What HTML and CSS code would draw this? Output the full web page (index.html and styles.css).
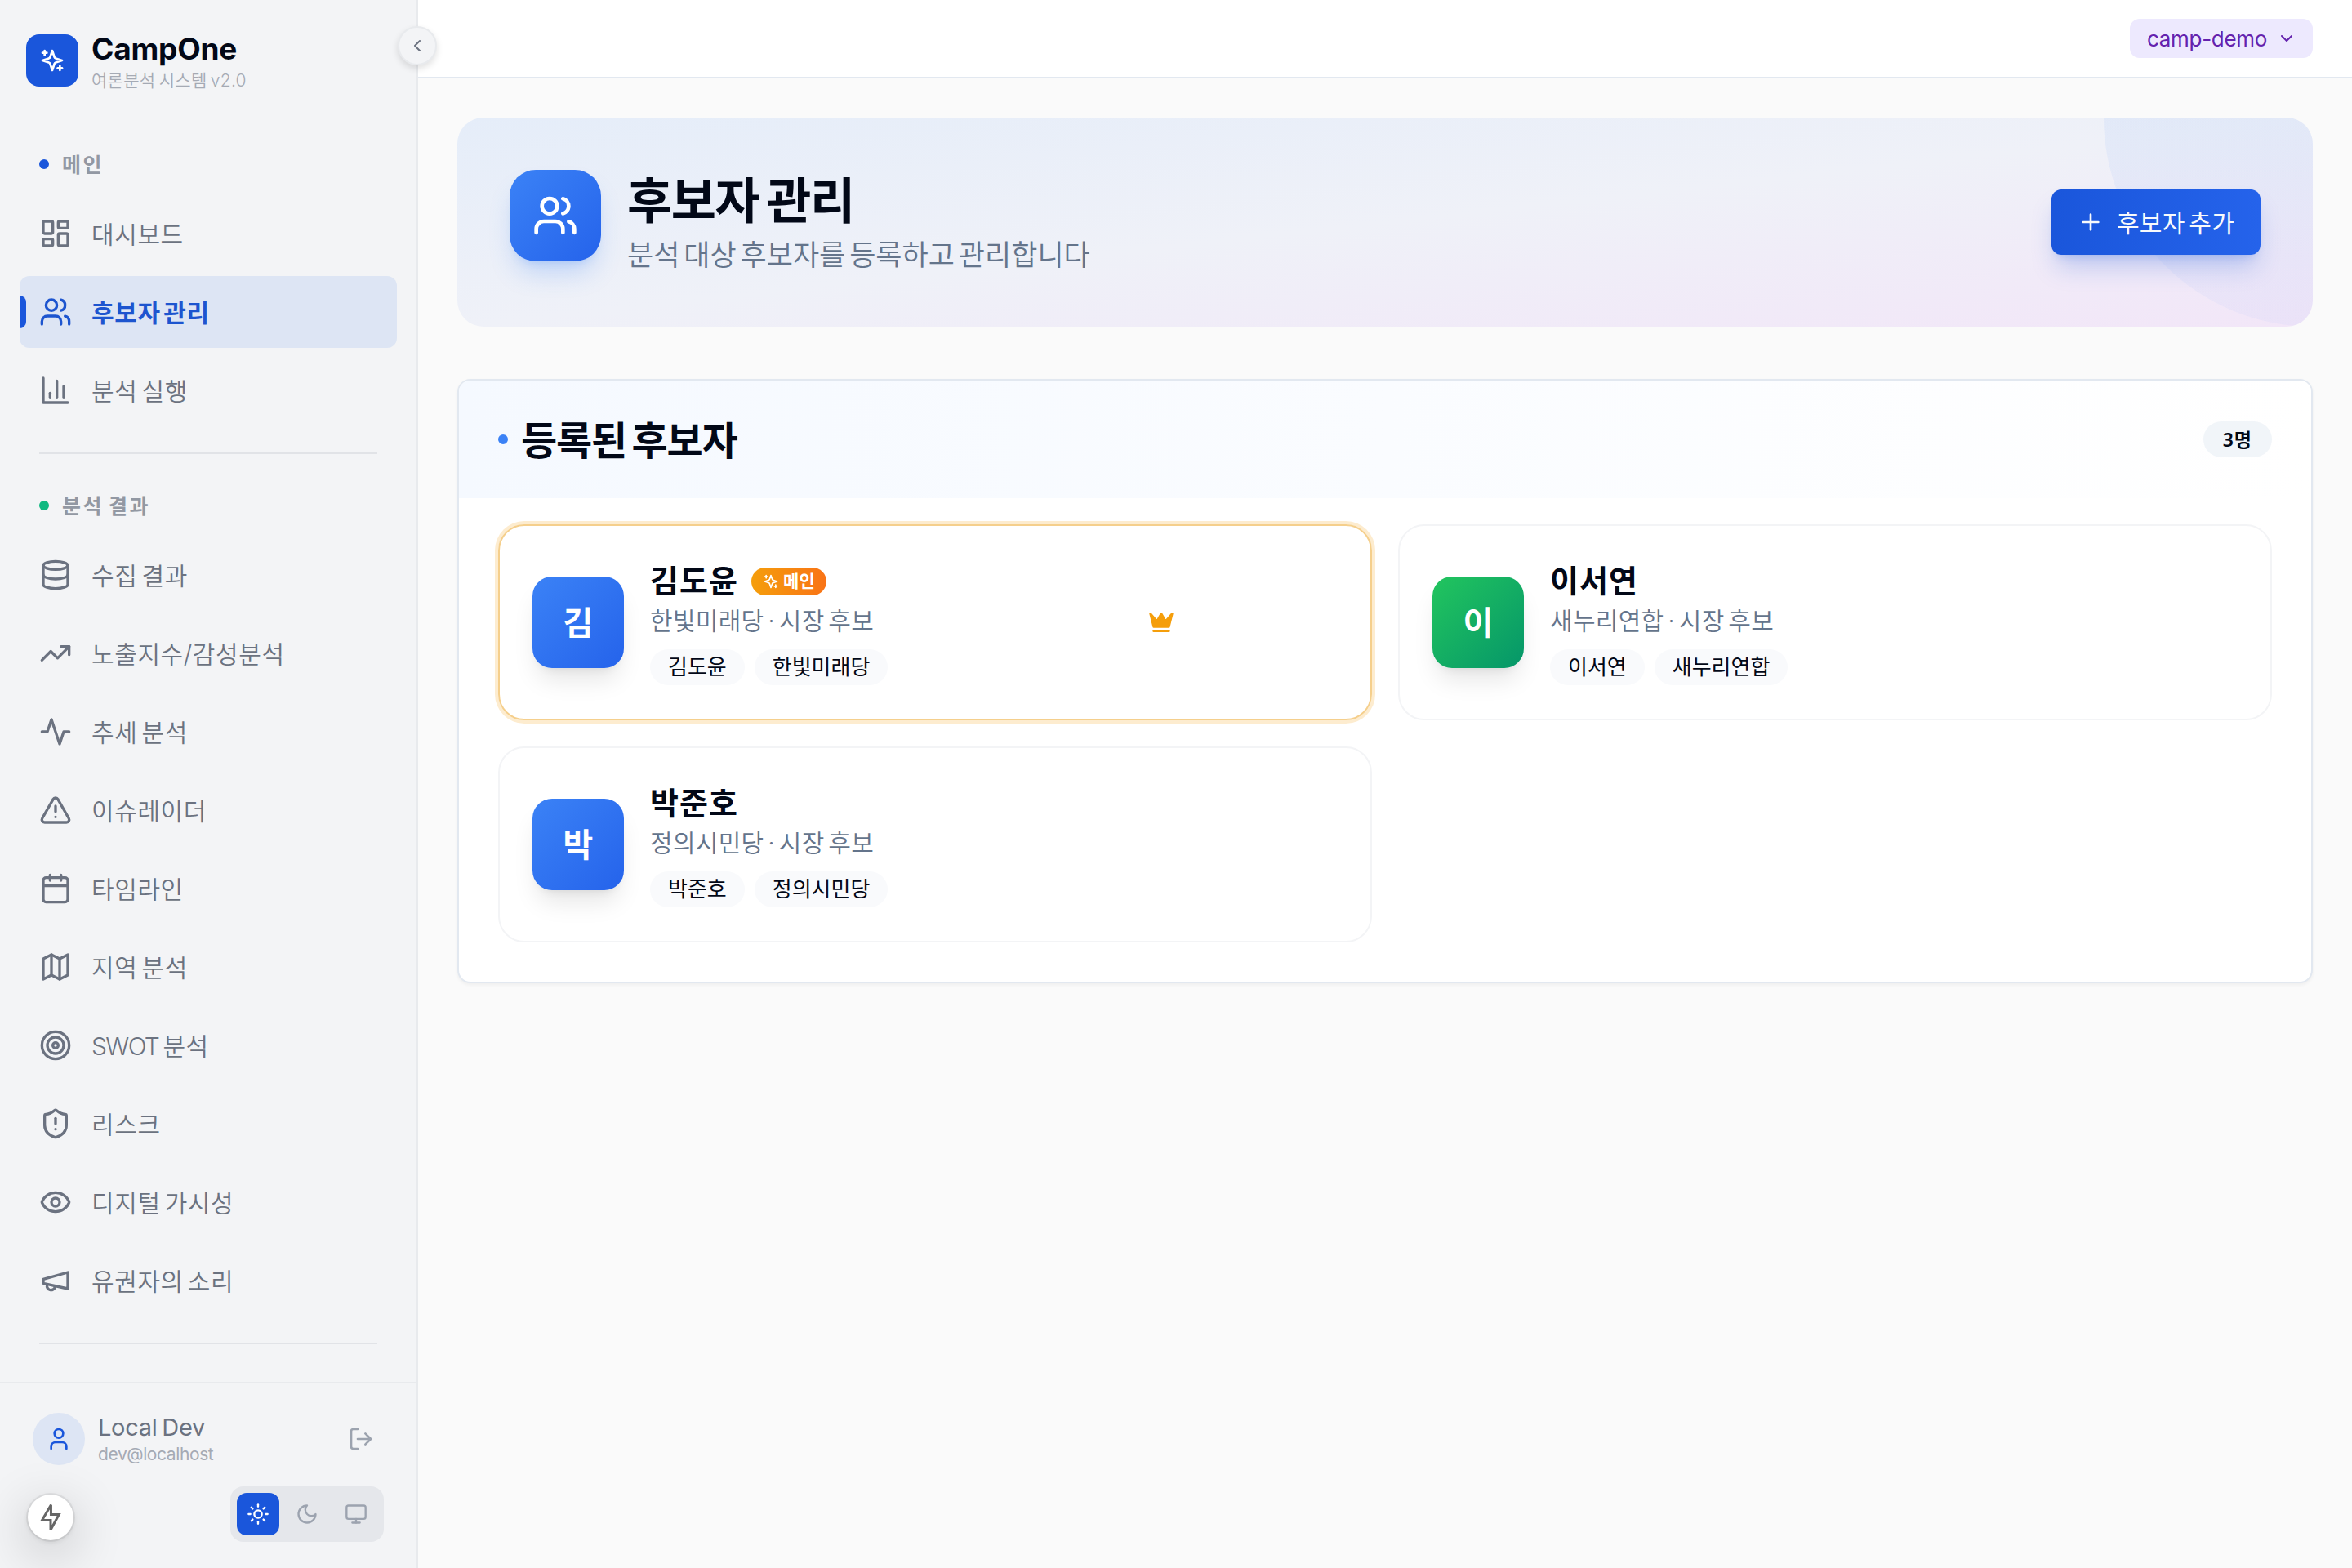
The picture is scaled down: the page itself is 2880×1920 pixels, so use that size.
FILE: index.html
```
<!DOCTYPE html>
<html lang="ko">
<head>
    <meta charset="UTF-8">
    <title>CampOne - 후보자 관리</title>
    <link rel="stylesheet" href="styles.css">
</head>
<body>
<svg class="sprite" aria-hidden="true">
    <symbol id="sparkles" viewBox="0 0 24 24">
        <path d="m12 3-1.912 5.813a2 2 0 0 1-1.275 1.275L3 12l5.813 1.912a2 2 0 0 1 1.275 1.275L12 21l1.912-5.813a2 2 0 0 1 1.275-1.275L21 12l-5.813-1.912a2 2 0 0 1-1.275-1.275L12 3Z"/>
        <path d="M5 3v4"/><path d="M19 17v4"/><path d="M3 5h4"/><path d="M17 19h4"/>
    </symbol>
    <symbol id="users" viewBox="0 0 24 24">
        <path d="M16 21v-2a4 4 0 0 0-4-4H6a4 4 0 0 0-4 4v2"/><circle cx="9" cy="7" r="4"/>
        <path d="M22 21v-2a4 4 0 0 0-3-3.87"/><path d="M16 3.13a4 4 0 0 1 0 7.75"/>
    </symbol>
</svg>

<div class="app">
    <aside class="sidebar">
        <div class="brand">
            <div class="brand-logo"><svg class="icon icon-32"><use href="#sparkles"/></svg></div>
            <div class="brand-text">
                <div class="brand-name">CampOne</div>
                <div class="brand-sub">여론분석 시스템 v2.0</div>
            </div>
        </div>
        <button class="collapse-btn" aria-label="접기">
            <svg class="icon icon-24" viewBox="0 0 24 24"><path d="m15 18-6-6 6-6"/></svg>
        </button>

        <nav class="nav">
            <div class="nav-label"><span class="dot"></span><span class="label-text">메인</span></div>
            <a class="nav-item">
                <svg class="icon" viewBox="0 0 24 24"><rect width="7" height="9" x="3" y="3" rx="1"/><rect width="7" height="5" x="14" y="3" rx="1"/><rect width="7" height="9" x="14" y="12" rx="1"/><rect width="7" height="5" x="3" y="16" rx="1"/></svg>
                <span>대시보드</span>
            </a>
            <a class="nav-item active">
                <svg class="icon"><use href="#users"/></svg>
                <span>후보자 관리</span>
            </a>
            <a class="nav-item">
                <svg class="icon" viewBox="0 0 24 24"><path d="M3 3v18h18"/><path d="M13 17V5"/><path d="M18 17V9"/><path d="M8 17v-3"/></svg>
                <span>분석 실행</span>
            </a>

            <div class="divider"></div>

            <div class="nav-label"><span class="dot green"></span><span class="label-text">분석 결과</span></div>
            <a class="nav-item">
                <svg class="icon" viewBox="0 0 24 24"><ellipse cx="12" cy="5" rx="9" ry="3"/><path d="M3 5v14a9 3 0 0 0 18 0V5"/><path d="M3 12a9 3 0 0 0 18 0"/></svg>
                <span>수집 결과</span>
            </a>
            <a class="nav-item">
                <svg class="icon" viewBox="0 0 24 24"><path d="m22 7-8.5 8.5-5-5L2 17"/><path d="M16 7h6v6"/></svg>
                <span>노출지수/감성분석</span>
            </a>
            <a class="nav-item">
                <svg class="icon" viewBox="0 0 24 24"><path d="M22 12h-4l-3 9L9 3l-3 9H2"/></svg>
                <span>추세 분석</span>
            </a>
            <a class="nav-item">
                <svg class="icon" viewBox="0 0 24 24"><path d="m21.73 18-8-14a2 2 0 0 0-3.48 0l-8 14A2 2 0 0 0 4 21h16a2 2 0 0 0 1.73-3Z"/><path d="M12 9v4"/><path d="M12 17h.01"/></svg>
                <span>이슈레이더</span>
            </a>
            <a class="nav-item">
                <svg class="icon" viewBox="0 0 24 24"><path d="M8 2v4"/><path d="M16 2v4"/><rect width="18" height="18" x="3" y="4" rx="2"/><path d="M3 10h18"/></svg>
                <span>타임라인</span>
            </a>
            <a class="nav-item">
                <svg class="icon" viewBox="0 0 24 24"><path d="m3 6 6-3 6 3 6-3v15l-6 3-6-3-6 3Z"/><path d="M9 3v15"/><path d="M15 6v15"/></svg>
                <span>지역 분석</span>
            </a>
            <a class="nav-item">
                <svg class="icon" viewBox="0 0 24 24"><circle cx="12" cy="12" r="10"/><circle cx="12" cy="12" r="6"/><circle cx="12" cy="12" r="2"/></svg>
                <span><span class="latin">SWOT</span> 분석</span>
            </a>
            <a class="nav-item">
                <svg class="icon" viewBox="0 0 24 24"><path d="M20 13c0 5-3.5 7.5-7.66 8.95a1 1 0 0 1-.67-.01C7.5 20.5 4 18 4 13V6a1 1 0 0 1 1-1c2 0 4.500-1.200 6.240-2.720a1.170 1.170 0 0 1 1.520 0C14.510 3.810 17 5 19 5a1 1 0 0 1 1 1z"/><path d="M12 8v4"/><path d="M12 16h.01"/></svg>
                <span>리스크</span>
            </a>
            <a class="nav-item">
                <svg class="icon" viewBox="0 0 24 24"><path d="M2.062 12.348a1 1 0 0 1 0-.696 10.750 10.750 0 0 1 19.876 0 1 1 0 0 1 0 .696 10.750 10.750 0 0 1-19.876 0"/><circle cx="12" cy="12" r="3"/></svg>
                <span>디지털 가시성</span>
            </a>
            <a class="nav-item">
                <svg class="icon" viewBox="0 0 24 24"><path d="m3 11 18-5v12L3 14v-3z"/><path d="M11.600 16.800a3 3 0 1 1-5.800-1.600"/></svg>
                <span>유권자의 소리</span>
            </a>

            <div class="divider"></div>
        </nav>

        <div class="sidebar-footer">
            <div class="user">
                <div class="user-avatar">
                    <svg class="icon icon-32" viewBox="0 0 24 24"><path d="M19 21v-2a4 4 0 0 0-4-4H9a4 4 0 0 0-4 4v2"/><circle cx="12" cy="7" r="4"/></svg>
                </div>
                <div class="user-text">
                    <div class="user-name">Local Dev</div>
                    <div class="user-mail">dev@localhost</div>
                </div>
                <svg class="icon icon-32 logout" viewBox="0 0 24 24"><path d="M9 21H5a2 2 0 0 1-2-2V5a2 2 0 0 1 2-2h4"/><path d="m16 17 5-5-5-5"/><path d="M21 12H9"/></svg>
            </div>
            <div class="theme-toggle">
                <button class="theme-btn selected">
                    <svg class="icon icon-28" viewBox="0 0 24 24"><circle cx="12" cy="12" r="4"/><path d="M12 2v2"/><path d="M12 20v2"/><path d="m4.930 4.930 1.410 1.410"/><path d="m17.660 17.660 1.410 1.410"/><path d="M2 12h2"/><path d="M20 12h2"/><path d="m6.340 17.660-1.410 1.410"/><path d="m19.070 4.930-1.410 1.410"/></svg>
                </button>
                <button class="theme-btn">
                    <svg class="icon icon-28" viewBox="0 0 24 24"><path d="M12 3a6 6 0 0 0 9 9 9 9 0 1 1-9-9Z"/></svg>
                </button>
                <button class="theme-btn">
                    <svg class="icon icon-28" viewBox="0 0 24 24"><rect width="20" height="14" x="2" y="3" rx="2"/><path d="M8 21h8"/><path d="M12 17v4"/></svg>
                </button>
            </div>
        </div>
        <button class="quick-btn" aria-label="바로가기">
            <svg class="quick-icon" viewBox="0 0 24 24"><path d="M12.300 1.800 5 14.300h7V22.200L18.800 9.700h-6.500Z"/></svg>
        </button>
    </aside>

    <div class="content">
        <header class="topbar">
            <button class="camp-select">
                <span>camp-demo</span>
                <svg class="icon icon-24" viewBox="0 0 24 24"><path d="m6 9 6 6 6-6"/></svg>
            </button>
        </header>

        <main class="main">
            <section class="hero">
                <div class="hero-circle"></div>
                <div class="hero-icon"><svg class="icon icon-56"><use href="#users"/></svg></div>
                <div class="hero-text">
                    <h1>후보자 관리</h1>
                    <p>분석 대상 후보자를 등록하고 관리합니다</p>
                </div>
                <button class="add-btn">
                    <svg class="icon icon-32" viewBox="0 0 24 24"><path d="M5 12h14"/><path d="M12 5v14"/></svg>
                    <span>후보자 추가</span>
                </button>
            </section>

            <section class="panel">
                <div class="panel-header">
                    <span class="panel-dot"></span>
                    <h2>등록된 후보자</h2>
                    <span class="count">3명</span>
                </div>
                <div class="candidates">
                    <div class="candidate main-candidate">
                        <div class="avatar">김</div>
                        <div class="info">
                            <div class="name-row">
                                <span class="name">김도윤</span>
                                <span class="main-badge"><svg class="icon icon-20"><use href="#sparkles"/></svg>메인</span>
                            </div>
                            <div class="party">한빛미래당 · 시장 후보</div>
                            <div class="chips"><span class="chip">김도윤</span><span class="chip">한빛미래당</span></div>
                        </div>
                        <svg class="icon icon-32 crown" viewBox="0 0 24 24"><path d="m2 4 3 12h14l3-12-6 7-4-7-4 7-6-7z"/><path d="M5 20h14"/></svg>
                    </div>

                    <div class="candidate">
                        <div class="avatar green">이</div>
                        <div class="info">
                            <div class="name-row"><span class="name">이서연</span></div>
                            <div class="party">새누리연합 · 시장 후보</div>
                            <div class="chips"><span class="chip">이서연</span><span class="chip">새누리연합</span></div>
                        </div>
                    </div>

                    <div class="candidate">
                        <div class="avatar">박</div>
                        <div class="info">
                            <div class="name-row"><span class="name">박준호</span></div>
                            <div class="party">정의시민당 · 시장 후보</div>
                            <div class="chips"><span class="chip">박준호</span><span class="chip">정의시민당</span></div>
                        </div>
                    </div>
                </div>
            </section>
        </main>
    </div>
</div>
</body>
</html>
```
FILE: styles.css
```
* {
    box-sizing: border-box;
    margin: 0;
    padding: 0;
}

body {
    font-family: Inter, "Noto Sans CJK KR", sans-serif;
    font-size: 30px;
    letter-spacing: 0.3px;
    word-spacing: -4px;
    color: #020817;
    background-color: #fafafa;
}

button {
    font: inherit;
    letter-spacing: inherit;
    word-spacing: inherit;
    color: inherit;
    border: none;
    background: none;
}

.sprite {
    display: none;
}

.icon {
    width: 40px;
    height: 40px;
    flex-shrink: 0;
    fill: none;
    stroke: currentColor;
    stroke-width: 2;
    stroke-linecap: round;
    stroke-linejoin: round;
}

.icon-20 { width: 20px; height: 20px; }
.icon-24 { width: 24px; height: 24px; }
.icon-28 { width: 28px; height: 28px; }
.icon-32 { width: 32px; height: 32px; }
.icon-56 { width: 56px; height: 56px; }

.app {
    display: flex;
    width: 2880px;
    height: 1920px;
    overflow: hidden;
}

/* sidebar */
.sidebar {
    position: relative;
    display: flex;
    flex-direction: column;
    width: 512px;
    flex-shrink: 0;
    background-color: #f3f4f6;
    border-right: 2px solid #e8eaed;
}

.brand {
    display: flex;
    align-items: center;
    gap: 16px;
    height: 148px;
    padding: 0 32px;
}

.brand-logo {
    display: flex;
    align-items: center;
    justify-content: center;
    width: 64px;
    height: 64px;
    border-radius: 16px;
    color: white;
    background-color: #1a56db;
}

.brand-text {
    padding-top: 6px;
}

.brand-name {
    font-size: 37px;
    font-weight: 700;
    line-height: 40px;
    letter-spacing: -0.2px;
}

.brand-sub {
    margin-top: 4px;
    font-size: 21px;
    font-weight: 350;
    line-height: 30px;
    word-spacing: -2px;
    color: #a5aab4;
}

.collapse-btn {
    position: absolute;
    top: 32px;
    right: -25px;
    z-index: 2;
    display: flex;
    align-items: center;
    justify-content: center;
    width: 48px;
    height: 48px;
    border: 2px solid #e8eaed;
    border-radius: 50%;
    color: #6b7280;
    background-color: #f3f4f6;
    box-shadow: 0 4px 8px rgba(0, 0, 0, 0.12);
}

.nav {
    flex: 1;
    padding: 24px 24px 0;
}

.nav-label {
    display: flex;
    align-items: center;
    gap: 16px;
    height: 58px;
    margin-bottom: 12px;
    padding-left: 24px;
    font-size: 25px;
    font-weight: 700;
    letter-spacing: 2.4px;
    word-spacing: -2px;
    color: #9298a3;
}

.label-text {
    padding-bottom: 3px;
}

.dot {
    width: 12px;
    height: 12px;
    border-radius: 50%;
    background-color: #1a56db;
}

.dot.green {
    background-color: #10b981;
}

.nav-item {
    position: relative;
    display: flex;
    align-items: center;
    gap: 24px;
    width: 462px;
    height: 88px;
    margin-bottom: 8px;
    padding-left: 24px;
    border-radius: 12px;
    font-weight: 350;
    letter-spacing: 0.6px;
    color: #6b7280;
    overflow: hidden;
}

.nav-item span {
    padding-bottom: 2px;
}

.nav-item.active {
    font-weight: 700;
    color: #1d55cf;
    background-color: #dde5f4;
}

.nav-item.active::before {
    content: "";
    position: absolute;
    left: 0;
    top: 24px;
    width: 8px;
    height: 40px;
    border-radius: 0 8px 8px 0;
    background-color: #1a56db;
}

.latin {
    letter-spacing: -1.6px;
}

.divider {
    width: 414px;
    height: 2px;
    margin: 32px 24px 34px;
    background-color: #e1e3e7;
}

.sidebar-footer {
    display: flex;
    flex-direction: column;
    height: 228px;
    padding: 36px 40px 32px;
    border-top: 2px solid #e8eaed;
}

.user {
    display: flex;
    align-items: center;
    gap: 16px;
    height: 64px;
}

.user-avatar {
    display: flex;
    align-items: center;
    justify-content: center;
    width: 64px;
    height: 64px;
    border-radius: 50%;
    color: #1a56db;
    background-color: #dde5f4;
}

.user-text {
    flex: 1;
}

.user-name {
    font-size: 29px;
    line-height: 38px;
    letter-spacing: -0.3px;
    word-spacing: -2px;
    color: #6b7280;
}

.user-mail {
    font-size: 21px;
    line-height: 28px;
    letter-spacing: -0.4px;
    color: #a5aab4;
}

.logout {
    margin-right: 12px;
    color: #9ca3af;
}

.theme-toggle {
    display: flex;
    align-self: flex-end;
    gap: 8px;
    margin-top: 26px;
    padding: 8px;
    border-radius: 16px;
    background-color: #e5e7eb;
}

.theme-btn {
    display: flex;
    align-items: center;
    justify-content: center;
    width: 52px;
    height: 52px;
    border-radius: 12px;
    color: #9ca3af;
}

.theme-btn.selected {
    color: white;
    background-color: #1a56db;
}

.quick-btn {
    position: absolute;
    left: 34px;
    bottom: 34px;
    display: flex;
    align-items: center;
    justify-content: center;
    width: 56px;
    height: 56px;
    border-radius: 50%;
    background-color: white;
    box-shadow: 0 0 0 2px rgba(0, 0, 0, 0.06), 0 2px 6px rgba(0, 0, 0, 0.1), 0 16px 64px rgba(0, 0, 0, 0.24);
}

.quick-icon {
    width: 36px;
    height: 36px;
    flex-shrink: 0;
    fill: none;
    stroke: #666;
    stroke-width: 2;
    stroke-miterlimit: 2.5;
}

/* content */
.content {
    flex: 1;
    min-width: 0;
}

.topbar {
    display: flex;
    align-items: center;
    justify-content: flex-end;
    height: 96px;
    padding: 0 48px;
    background-color: white;
    border-bottom: 2px solid #e2e8f0;
}

.camp-select {
    display: flex;
    align-items: center;
    justify-content: space-between;
    width: 224px;
    height: 48px;
    padding: 0 20px 0 21px;
    border-radius: 12px;
    font-size: 26px;
    letter-spacing: -0.3px;
    color: #6422ae;
    background-color: #ede9fe;
}

.main {
    display: flex;
    flex-direction: column;
    gap: 64px;
    padding: 48px;
}

.hero {
    position: relative;
    display: flex;
    align-items: center;
    gap: 32px;
    height: 256px;
    padding: 0 64px;
    border-radius: 32px;
    background: linear-gradient(to bottom right, #e5edf9, #eff1f8 50%, #f2e6f8);
    overflow: hidden;
}

.hero-circle {
    position: absolute;
    top: -256px;
    right: -256px;
    width: 512px;
    height: 512px;
    border-radius: 50%;
    background: linear-gradient(to bottom, rgba(59, 130, 246, 0.07) 50%, rgba(59, 130, 246, 0.04));
}

.hero-icon {
    display: flex;
    align-items: center;
    justify-content: center;
    width: 112px;
    height: 112px;
    margin-bottom: 16px;
    border-radius: 32px;
    color: white;
    background: linear-gradient(to bottom right, #3b82f6, #2563eb);
    box-shadow: 0 20px 30px -6px rgba(59, 130, 246, 0.25), 0 8px 12px -8px rgba(59, 130, 246, 0.25);
}

.hero-text {
    flex: 1;
    padding-top: 5px;
}

h1 {
    font-size: 60px;
    line-height: 72px;
    letter-spacing: -1.4px;
}

.hero-text p {
    margin-top: 2px;
    font-size: 35px;
    font-weight: 350;
    line-height: 56px;
    letter-spacing: 0;
    word-spacing: -5px;
    color: #64748b;
}

.add-btn {
    position: relative;
    display: flex;
    align-items: center;
    justify-content: center;
    gap: 16px;
    width: 256px;
    height: 80px;
    border-radius: 12px;
    color: #f8fafc;
    background: linear-gradient(to right, #1a56db, #2563eb);
    box-shadow: 0 20px 30px -6px rgba(26, 86, 219, 0.25), 0 8px 12px -8px rgba(26, 86, 219, 0.25);
}

.add-btn span {
    padding-bottom: 2px;
}

.panel {
    border: 2px solid #e2e8f0;
    border-radius: 16px;
    background-color: white;
    box-shadow: 0 2px 4px rgba(0, 0, 0, 0.05);
    overflow: hidden;
}

.panel-header {
    display: flex;
    align-items: center;
    height: 144px;
    padding: 0 48px;
    background: linear-gradient(to right, #f5f9ff, white);
}

.panel-dot {
    width: 12px;
    height: 12px;
    margin-right: 16px;
    border-radius: 50%;
    background-color: #3b82f6;
}

h2 {
    flex: 1;
    padding-top: 3px;
    font-size: 48px;
    line-height: 64px;
    letter-spacing: -1.1px;
}

.count {
    padding: 0 24px;
    border-radius: 22px;
    font-family: "Noto Sans", "Noto Sans CJK KR", sans-serif;
    font-size: 23px;
    font-weight: 600;
    line-height: 44px;
    letter-spacing: 1px;
    background-color: #f1f5f9;
}

.candidates {
    display: grid;
    grid-template-columns: 1fr 1fr;
    gap: 32px;
    padding: 32px 48px 48px;
}

.candidate {
    display: flex;
    align-items: center;
    gap: 32px;
    height: 240px;
    padding: 0 40px;
    border: 2px solid #f3f4f6;
    border-radius: 32px;
}

.main-candidate {
    border-color: #f5cf8c;
    box-shadow: 0 0 0 4px #fdeccf;
}

.avatar {
    display: flex;
    align-items: center;
    justify-content: center;
    width: 112px;
    height: 112px;
    padding-bottom: 4px;
    border-radius: 24px;
    font-size: 40px;
    font-weight: 700;
    color: white;
    background: linear-gradient(to bottom right, #3b82f6, #2563eb);
    box-shadow: 0 20px 30px -6px rgba(0, 0, 0, 0.1), 0 8px 12px -8px rgba(0, 0, 0, 0.1);
}

.avatar.green {
    background: linear-gradient(to bottom right, #22c55e, #059669);
}

.name-row {
    display: flex;
    align-items: center;
    gap: 16px;
    height: 52px;
}

.name {
    padding-bottom: 2px;
    font-size: 38px;
    font-weight: 700;
    line-height: 50px;
    letter-spacing: 1px;
}

.main-badge {
    display: flex;
    align-items: center;
    gap: 5px;
    height: 34px;
    padding: 0 14px;
    border-radius: 17px;
    font-size: 21px;
    font-weight: 700;
    line-height: 32px;
    color: white;
    background: linear-gradient(to right, #f59e0b, #f97316);
}

.party {
    font-size: 30px;
    font-weight: 350;
    line-height: 45px;
    color: #64748b;
}

.chips {
    display: flex;
    gap: 12px;
    margin-top: 12px;
}

.chip {
    padding: 0 22px;
    border-radius: 22px;
    font-size: 26px;
    line-height: 44px;
    letter-spacing: 0;
    background-color: #f9fafc;
}

.crown {
    margin-left: auto;
    margin-right: 200px;
    color: #f59e0b;
    fill: #f59e0b;
}
```
